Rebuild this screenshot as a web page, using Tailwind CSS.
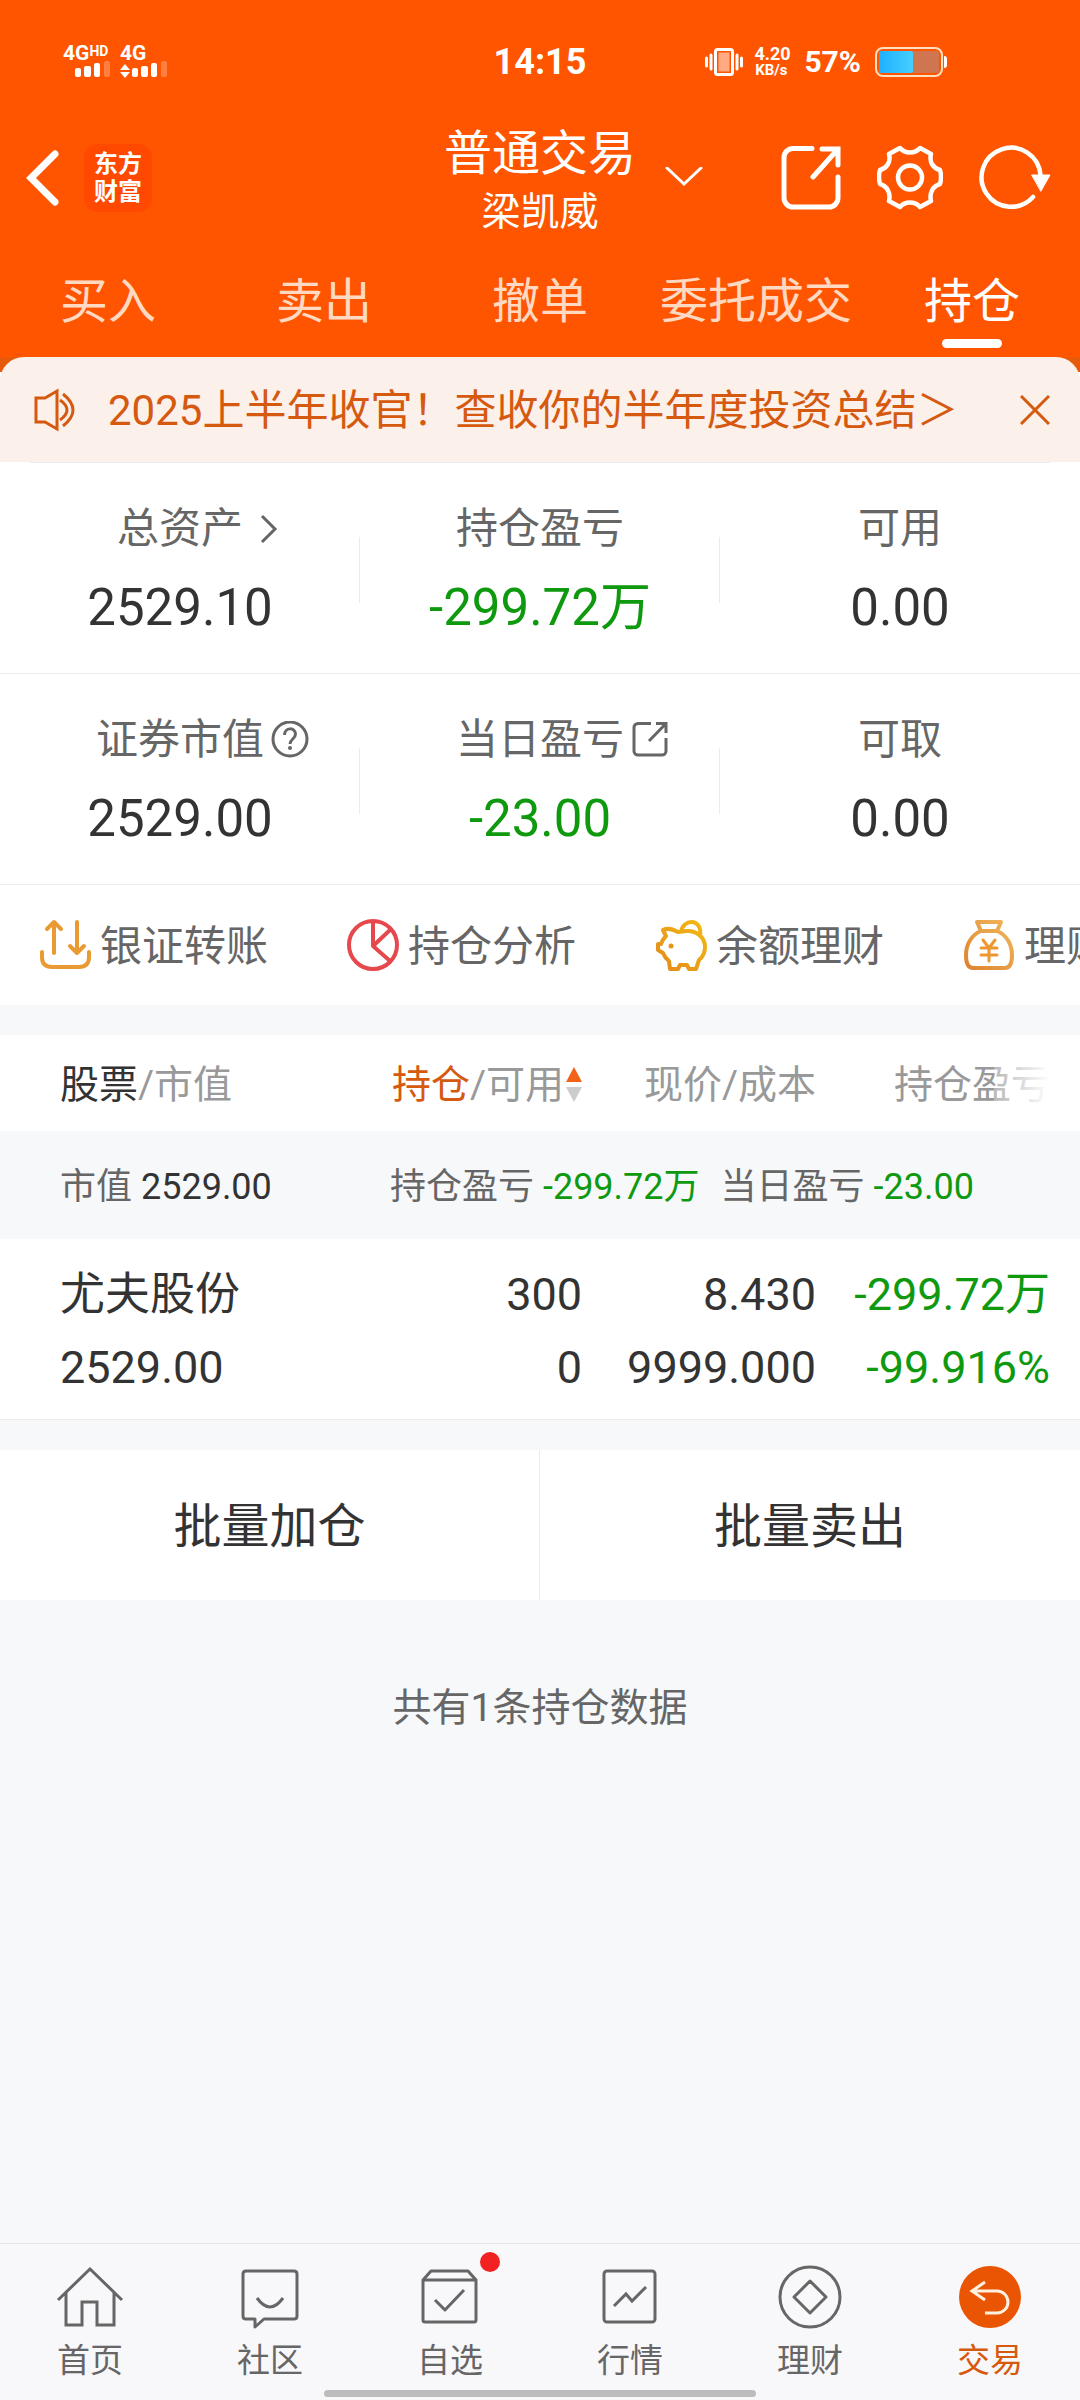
<!DOCTYPE html>
<html lang="zh-CN">
<head>
<meta charset="UTF-8">
<meta name="viewport" content="width=device-width, initial-scale=1">
<title>普通交易 - 持仓</title>
<script src="https://cdn.jsdelivr.net/npm/@tailwindcss/browser@4"></script>
</head>
<body class="flex min-h-screen flex-col overflow-x-hidden bg-[#f7f8fa] font-['Roboto','Noto_Sans_CJK_SC',sans-serif] text-[#333]">

<header class="bg-[#ff5500] text-white">
  <!-- Status bar -->
  <div class="grid h-[116px] grid-cols-[1fr_auto_1fr] items-center pt-[8px] font-bold">
    <div class="flex gap-[10px] pl-[63px]">
      <div class="flex w-[47px] flex-col">
        <div class="flex items-start text-[21px] leading-[16px]">4G<span class="text-[14px] leading-[12px]">HD</span></div>
        <svg class="h-[18px] w-[47px]" viewBox="0 0 47 18" fill="#fff"><rect x="12" y="7" width="6" height="9" rx="2"/><rect x="21" y="5" width="7" height="11" rx="2"/><rect x="31" y="2" width="6" height="14" rx="2"/><rect x="41" y="0" width="6" height="16" rx="2" opacity=".25"/></svg>
      </div>
      <div class="flex w-[47px] flex-col">
        <div class="text-[21px] leading-[16px]">4G</div>
        <svg class="h-[18px] w-[47px]" viewBox="0 0 47 18" fill="#fff"><path d="M0 9 5 3l5 6zM0 11h10l-5 6z"/><rect x="12" y="7" width="6" height="9" rx="2"/><rect x="21" y="5" width="7" height="11" rx="2"/><rect x="31" y="2" width="6" height="14" rx="2"/><rect x="41" y="0" width="6" height="16" rx="2" opacity=".25"/></svg>
      </div>
    </div>
    <div class="text-[36px] leading-[40px]">14:15</div>
    <div class="flex items-center pl-[119px]">
      <svg class="h-[30px] w-[38px]" viewBox="0 0 38 30" fill="none" stroke="#fff"><rect x="10.500" y="2.500" width="17" height="25" rx="2" stroke-width="3"/><rect x="13.500" y="5.500" width="11" height="19" fill="#fff" fill-opacity=".5" stroke="none"/><path d="M1.500 11v8M36.500 11v8M6 8v14M32 8v14" stroke-width="3" stroke-linecap="round"/></svg>
      <div class="ml-[11px] w-[34px] text-center">
        <div class="text-[18px] leading-[16px]">4.20</div>
        <div class="text-[15px] leading-[16px]">KB/s</div>
      </div>
      <div class="ml-[16px] text-[30px] leading-[32px]">57%</div>
      <svg class="ml-[14px] h-[32px] w-[73px]" viewBox="0 0 73 32"><defs><linearGradient id="charge"><stop offset="0" stop-color="#1fb0ff"/><stop offset="1" stop-color="#45d0ff"/></linearGradient></defs><rect x="1" y="2" width="66" height="28" rx="7" fill="none" stroke="#ffe0c0" stroke-width="2"/><rect x="4" y="5" width="60" height="22" rx="2" fill="#cf7650"/><rect x="4" y="5" width="34" height="22" rx="2" fill="url(#charge)"/><path d="M69 10q3 0 3 3v6q0 3-3 3z" fill="#fff"/></svg>
    </div>
  </div>

  <!-- Title bar -->
  <div class="grid h-[120px] grid-cols-[1fr_auto_1fr] items-center">
    <div class="flex items-center gap-[24px] pl-[26px]">
      <button type="button" aria-label="返回"><svg class="block h-[58px] w-[34px]" viewBox="0 0 34 58" fill="none" stroke="#fff" stroke-width="7" stroke-linecap="round"><path d="M29 5 5 29l24 24"/></svg></button>
      <a href="#" class="flex size-[68px] flex-col items-center justify-center rounded-[14px] bg-[#ff4800] text-[24px] leading-[28px] font-bold"><span>东方</span><span>财富</span></a>
    </div>
    <h1 class="pt-[8px] text-center">
      <span class="block text-[48px] leading-[60px]">普通交易</span>
      <span class="block text-[39px] leading-[56px]">梁凯威</span>
    </h1>
    <div class="flex items-center pr-[29px]">
      <button type="button" aria-label="切换账户" aria-haspopup="listbox" class="ml-[29px]"><svg class="block h-[22px] w-[38px]" viewBox="0 0 38 22" fill="none" stroke="#fff" stroke-width="3" stroke-linecap="round"><path d="m2 1 17 16L36 1"/></svg></button>
      <div class="ml-auto flex gap-[36px]">
        <button type="button" aria-label="分享"><svg class="block h-[66px] w-[60px]" viewBox="0 0 60 66" fill="none" stroke="#fff" stroke-width="5" stroke-linecap="round"><path d="M31 3.500H12a9 9 0 0 0-9 9V53a9 9 0 0 0 9 9h36a9 9 0 0 0 9-9V32M41 4h16v16M57 4 32 32"/></svg></button>
        <button type="button" aria-label="设置"><svg class="block size-[66px]" viewBox="0 0 66 66" fill="none" stroke="#fff" stroke-width="4.500" stroke-linejoin="round"><path d="M23 3c5 6 15 6 20 0l11 6c-2 8 2 14 9 16q2 7 0 14c-7 2-11 9-9 17l-11 6c-5-6-15-6-20 0l-11-6c2-8-2-15-9-17q-2-7 0-14c7-2 11-8 9-16z"/><circle cx="33" cy="32.500" r="12"/></svg></button>
        <button type="button" aria-label="刷新"><svg class="block h-[66px] w-[72px]" viewBox="0 0 72 66" fill="none" stroke="#fff" stroke-width="4.500" stroke-linecap="round"><path d="M54 52A29.500 29.500 0 1 1 61.500 30"/><path d="M53 30h18l-9 16z" fill="#fff" stroke-width="1"/></svg></button>
      </div>
    </div>
  </div>

  <!-- Trade tabs -->
  <nav class="grid h-[121px] grid-cols-5 text-[48px] leading-[60px] text-[#ffd9c2]">
    <a href="#" class="flex items-center justify-center pt-[11px]">买入</a>
    <a href="#" class="flex items-center justify-center pt-[11px]">卖出</a>
    <a href="#" class="flex items-center justify-center pt-[11px]">撤单</a>
    <a href="#" class="flex items-center justify-center pt-[11px]">委托成交</a>
    <a href="#" aria-current="page" class="relative flex items-center justify-center pt-[11px] text-white">持仓<span class="absolute bottom-[9px] left-1/2 h-[9px] w-[60px] -translate-x-1/2 rounded-full bg-white"></span></a>
  </nav>
</header>

<main class="flex-1">
  <!-- Notice -->
  <div class="bg-[linear-gradient(#e65a0a_15px,#fff_15px)]">
    <div class="flex h-[105px] items-center rounded-t-[24px] bg-[#fcf0ea] pr-[30px] pl-[34px] text-[#d5590f]">
      <svg class="h-[44px] w-[44px]" viewBox="0 0 44 44" fill="none" stroke="currentColor" stroke-width="3"><path d="M2 10h9l12-7v38l-12-7H2zM26 12q14 10 0 20M29 6q20 16 0 32"/></svg>
      <a href="#" class="ml-[30px] pt-[3px] text-[42px] leading-[50px] whitespace-nowrap">2025上半年收官！查收你的半年度投资总结＞</a>
      <button type="button" aria-label="关闭" class="ml-auto"><svg class="block size-[30px]" viewBox="0 0 30 30" fill="none" stroke="currentColor" stroke-width="3"><path d="m1 1 28 28M29 1 1 29"/></svg></button>
    </div>
  </div>

  <!-- Account summary -->
  <section class="bg-white">
    <div class="mx-[30px] h-px bg-[#ececee]"></div>
    <dl class="grid h-[211px] grid-cols-3 items-center border-b border-[#ebebeb] pt-[3px] text-center">
      <div>
        <dt class="grid grid-cols-[1fr_auto_1fr] items-center text-[42px] leading-[64px] text-[#666]"><span></span>总资产<svg class="ml-[16px] h-[32px] w-[20px]" viewBox="0 0 20 32" fill="none" stroke="currentColor" stroke-width="3"><path d="m3 3 13 13L3 29"/></svg></dt>
        <dd class="mt-[12px] text-[51px] leading-[70px]">2529.10</dd>
      </div>
      <div class="relative">
        <span class="absolute top-1/2 -left-px h-[66px] w-px -translate-y-1/2 bg-[#ebebeb]"></span>
        <dt class="text-[42px] leading-[64px] text-[#666]">持仓盈亏</dt>
        <dd class="mt-[12px] text-[51px] leading-[70px] text-[#0f990f]">-299.72万</dd>
      </div>
      <div class="relative">
        <span class="absolute top-1/2 -left-px h-[66px] w-px -translate-y-1/2 bg-[#ebebeb]"></span>
        <dt class="text-[42px] leading-[64px] text-[#666]">可用</dt>
        <dd class="mt-[12px] text-[51px] leading-[70px]">0.00</dd>
      </div>
    </dl>
    <dl class="grid h-[211px] grid-cols-3 items-center border-b border-[#ebebeb] pt-[3px] text-center">
      <div>
        <dt class="grid grid-cols-[1fr_auto_1fr] items-center text-[42px] leading-[64px] text-[#666]"><span></span>证券市值<svg class="ml-[7px] size-[38px]" viewBox="0 0 38 38" fill="none" stroke="currentColor" stroke-width="3"><circle cx="19" cy="18" r="17"/><path d="M13.500 14c0-8 11-8 11-1 0 5-5.500 5-5.500 10"/><circle cx="19" cy="27" r="2" fill="currentColor" stroke="none"/></svg></dt>
        <dd class="mt-[12px] text-[51px] leading-[70px]">2529.00</dd>
      </div>
      <div class="relative">
        <span class="absolute top-1/2 -left-px h-[66px] w-px -translate-y-1/2 bg-[#ebebeb]"></span>
        <dt class="grid grid-cols-[1fr_auto_1fr] items-center text-[42px] leading-[64px] text-[#666]"><span></span>当日盈亏<svg class="ml-[8px] h-[38px] w-[36px]" viewBox="0 0 36 38" fill="none" stroke="currentColor" stroke-width="3"><path d="M19 2.500H6a4 4 0 0 0-4 4V30a4 4 0 0 0 4 4h24a4 4 0 0 0 4-4V17M24 2.500h10V12M34 2.500 17 20"/></svg></dt>
        <dd class="mt-[12px] text-[51px] leading-[70px] text-[#0f990f]">-23.00</dd>
      </div>
      <div class="relative">
        <span class="absolute top-1/2 -left-px h-[66px] w-px -translate-y-1/2 bg-[#ebebeb]"></span>
        <dt class="text-[42px] leading-[64px] text-[#666]">可取</dt>
        <dd class="mt-[12px] text-[51px] leading-[70px]">0.00</dd>
      </div>
    </dl>

    <!-- Shortcuts -->
    <div class="flex h-[120px] items-center gap-[79px] overflow-hidden pl-[39px] text-[42px] leading-[50px] whitespace-nowrap text-[#666]">
      <a href="#" class="flex shrink-0 items-center gap-[9px]"><svg class="size-[52px]" viewBox="0 0 52 52" fill="none" stroke="#ea9a33" stroke-width="4" stroke-linecap="round" stroke-linejoin="round"><path d="M15 34V3M8 10l7-7 7 7M38 3v31M31 27l7 7 7-7M3 33v5q0 10 10 10h27q10 0 10-10v-5"/></svg><span class="pt-[3px]">银证转账</span></a>
      <a href="#" class="flex shrink-0 items-center gap-[9px]"><svg class="size-[52px]" viewBox="0 0 52 52" fill="none" stroke="#e5484d" stroke-width="4" stroke-linejoin="round"><circle cx="26" cy="26" r="24"/><path d="M26 2v25l17-16M26 27l17 15"/></svg><span class="pt-[3px]">持仓分析</span></a>
      <a href="#" class="flex shrink-0 items-center gap-[9px]"><svg class="size-[52px]" viewBox="0 0 52 52" fill="none" stroke="url(#gold)" stroke-width="4" stroke-linejoin="round"><defs><linearGradient id="gold" x1="0" y1="1" x2="1" y2="0"><stop offset="0" stop-color="#e38a1c"/><stop offset="1" stop-color="#f3ba14"/></linearGradient></defs><path d="M23 13q-9-5-15-2l3 6q-4 4-5 8H3v6l5 3q2 5 6 8l1 8h8l2-4h7l2 4h7l3-9q6-5 6-13c0-10-9-17-19-16zM26 13c2-14 22-14 19 4"/><circle cx="16" cy="27" r="2.500" fill="#e8961a" stroke="none"/></svg><span class="pt-[3px]">余额理财</span></a>
      <a href="#" class="flex shrink-0 items-center gap-[9px]"><svg class="size-[52px]" viewBox="0 0 52 52" fill="none" stroke="url(#bag)" stroke-width="4" stroke-linecap="round" stroke-linejoin="round"><defs><linearGradient id="bag" x1="0" y1="1" x2="1" y2="0"><stop offset="0" stop-color="#dd8430"/><stop offset="1" stop-color="#f0b75c"/></linearGradient></defs><path d="M14 3h24l-4 9H18zM18 12C8 16 3 26 3 36q0 13 7 13h32q7 0 7-13c0-10-5-20-15-24"/><path d="m20 21 6 8 6-8M18 29h16M18 36h16M26 29v13" stroke="#ee9630" stroke-width="3"/></svg><span class="pt-[3px]">理财</span></a>
    </div>
  </section>

  <!-- Positions -->
  <section class="mt-[30px] border-b border-[#ebebeb] bg-white">
    <table class="w-full table-fixed border-collapse">
      <colgroup><col class="w-[348px]"><col><col><col class="w-[264px]"></colgroup>
      <thead class="text-[39px] leading-[48px] whitespace-nowrap text-[#999]">
        <tr class="h-[96px]">
          <th scope="col" class="pt-[3px] pl-[60px] text-left font-normal"><span class="text-[#333]">股票</span>/市值</th>
          <th scope="col" class="pt-[3px] font-normal"><button type="button" class="flex w-full items-center justify-end gap-[2px]"><span><span class="text-[#d5590f]">持仓</span>/可用</span><svg class="h-[36px] w-[16px] shrink-0" viewBox="0 0 16 36"><path d="M8 0l8 15H0z" fill="#f26318"/><path d="M8 35 0 20h16z" fill="#ccc"/></svg></button></th>
          <th scope="col" class="pt-[3px] text-right font-normal">现价/成本</th>
          <th scope="col" class="relative pt-[3px] pr-[30px] text-right font-normal">持仓盈亏<span class="absolute top-0 right-[30px] h-full w-[56px] bg-linear-to-r from-white/30 to-white"></span></th>
        </tr>
      </thead>
      <tbody class="text-[45px] leading-[73px] whitespace-nowrap">
        <tr class="h-[108px] bg-[#f7f8fa] text-[36px] leading-[44px]">
          <td class="pt-[3px] pl-[60px]"><span class="text-[#666]">市值</span> 2529.00</td>
          <td colspan="3" class="pt-[3px] pl-[42px] text-[#0f990f]"><span class="text-[#666]">持仓盈亏</span> -299.72万<span class="ml-[21px] text-[#666]">当日盈亏</span> -23.00</td>
        </tr>
        <tr class="h-[180px]">
          <td class="pt-[3px] pl-[60px]">尤夫股份<br>2529.00</td>
          <td class="pt-[3px] text-right">300<br>0</td>
          <td class="pt-[3px] text-right">8.430<br>9999.000</td>
          <td class="pt-[3px] pr-[30px] text-right text-[#0f990f]">-299.72万<br>-99.916%</td>
        </tr>
      </tbody>
    </table>
  </section>

  <div class="mt-[30px] grid h-[150px] grid-cols-2 bg-white text-[48px] leading-[60px]">
    <button type="button" class="border-r border-[#ebebeb] pt-[3px]">批量加仓</button>
    <button type="button" class="pt-[3px]">批量卖出</button>
  </div>
  <p class="mt-[82px] text-center text-[39px] leading-[52px] text-[#666]">共有1条持仓数据</p>
</main>

<!-- Bottom navigation -->
<footer class="border-t border-[#e4e4e6] bg-[#f8f8fa]">
  <nav class="grid grid-cols-6 pt-[18px] text-[33px] leading-[48px] text-[#666]">
    <a href="#" class="flex flex-col items-center gap-[3px]"><svg class="size-[72px]" viewBox="0 0 72 72" fill="none" stroke="currentColor" stroke-width="3"><path d="M4 38 36 7l32 31M12 31v32h16V40h15v23h17V31"/></svg>首页</a>
    <a href="#" class="flex flex-col items-center gap-[3px]"><svg class="size-[72px]" viewBox="0 0 72 72" fill="none" stroke="currentColor" stroke-width="3" stroke-linejoin="round"><path d="M12 9h48q3 0 3 3v42q0 3-3 3H30l-9 8v-8h-9q-3 0-3-3V12q0-3 3-3z"/><path d="M23 36q13 18 26 0"/></svg>社区</a>
    <a href="#" class="flex flex-col items-center gap-[3px]"><span class="relative"><svg class="block size-[72px]" viewBox="0 0 72 72" fill="none" stroke="currentColor" stroke-width="3" stroke-linejoin="round"><path d="M9 18l8-9h37l8 9v40q0 2-2 2H11q-2 0-2-2zM9 18h53M21 38l10 10 19-20"/></svg><span class="absolute -top-[10px] -right-[14px] size-[20px] rounded-full bg-[#f22222]"></span></span>自选</a>
    <a href="#" class="flex flex-col items-center gap-[3px]"><svg class="size-[72px]" viewBox="0 0 72 72" fill="none" stroke="currentColor" stroke-width="3"><rect x="10" y="9" width="51" height="51" rx="3"/><path d="m20 44 12-12 6 7 14-14"/></svg>行情</a>
    <a href="#" class="flex flex-col items-center gap-[3px]"><svg class="size-[72px]" viewBox="0 0 72 72" fill="none" stroke="currentColor" stroke-width="3" stroke-linejoin="round"><circle cx="36" cy="35" r="30"/><path d="m36 19 16 16-16 16-16-16z"/></svg>理财</a>
    <a href="#" aria-current="page" class="flex flex-col items-center gap-[3px] text-[#d5590f]"><svg class="size-[72px]" viewBox="0 0 72 72" fill="none" stroke="#fff0e0" stroke-width="3"><circle cx="36" cy="35" r="31" fill="#ea5504" stroke="none"/><path d="M31 20 18 29l13 9M18 29h25a11 11 0 0 1 0 22H31"/></svg>交易</a>
  </nav>
  <div class="mx-auto mt-[5px] mb-[3px] h-[7px] w-2/5 rounded-full bg-[#bcbcbc]"></div>
</footer>
</body>
</html>
